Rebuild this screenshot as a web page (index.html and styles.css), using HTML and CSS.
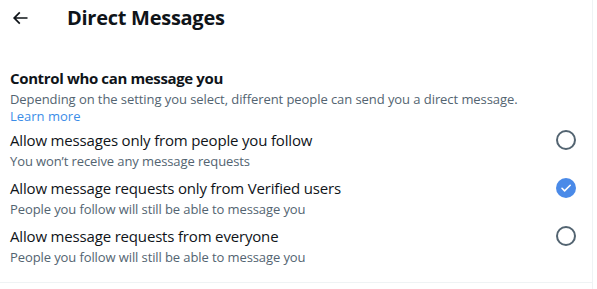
FILE: index.html
```html
<!DOCTYPE html>
<html>
<head>
<meta charset="utf-8">
<link rel="stylesheet" href="styles.css">
</head>
<body>
<div class="panel">
  <header class="header">
    <span class="back">
      <svg viewBox="0 0 24 24" width="20" height="20"><path d="M7.414 13l5.043 5.04-1.414 1.42L3.586 12l7.457-7.46 1.414 1.42L7.414 11H21v2H7.414z" fill="#0f1419"/></svg>
    </span>
    <h1 class="title">Direct Messages</h1>
  </header>
  <section class="section">
    <h2 class="section-title">Control who can message you</h2>
    <p class="desc">Depending on the setting you select, different people can send you a direct message.</p>
    <a class="learn">Learn more</a>
    <div class="options">
      <div class="option">
        <div class="texts">
          <div class="main">Allow messages only from people you follow</div>
          <div class="sub">You won’t receive any message requests</div>
        </div>
        <span class="radio"></span>
      </div>
      <div class="option">
        <div class="texts">
          <div class="main">Allow message requests only from Verified users</div>
          <div class="sub">People you follow will still be able to message you</div>
        </div>
        <span class="radio checked">
          <svg viewBox="0 0 20 20" width="20" height="20"><path d="M6 10.3l2.6 2.6L14.2 7.3" fill="none" stroke="#fff" stroke-width="1.6" stroke-linecap="round" stroke-linejoin="round"/></svg>
        </span>
      </div>
      <div class="option">
        <div class="texts">
          <div class="main">Allow message requests from everyone</div>
          <div class="sub">People you follow will still be able to message you</div>
        </div>
        <span class="radio"></span>
      </div>
    </div>
  </section>
  <div class="divider"></div>
</div>
</body>
</html>
```
FILE: styles.css
```css
html, body {
  margin: 0;
  padding: 0;
  background: #ffffff;
}
body {
  font-family: "Open Sans", "Noto Sans", sans-serif;
  color: #0f1419;
}
.panel {
  width: 592px;
  height: 289px;
  border-right: 1px solid #eff3f4;
  box-sizing: content-box;
}
.header {
  display: flex;
  align-items: center;
  padding: 6px 0 0 10px;
  height: 24px;
}
.back {
  display: flex;
  width: 20px;
  height: 20px;
}
.title {
  margin: 0 0 0 37px;
  font-size: 20px;
  line-height: 24px;
  font-weight: 700;
  letter-spacing: -0.27px;
}
.section {
  padding: 38px 16px 15px 10px;
}
.section-title {
  margin: 0;
  font-size: 15px;
  line-height: 20px;
  font-weight: 700;
  letter-spacing: -0.36px;
}
.desc {
  margin: 3px 0 0;
  font-size: 13px;
  line-height: 17px;
  color: #536471;
  letter-spacing: -0.07px;
}
.learn {
  display: block;
  font-size: 13px;
  line-height: 17px;
  color: #3b8de8;
}
.options {
  margin-top: 5px;
  display: flex;
  flex-direction: column;
  gap: 7px;
}
.option {
  display: flex;
  justify-content: space-between;
  align-items: flex-start;
}
.main {
  font-size: 15px;
  line-height: 20px;
  letter-spacing: -0.17px;
}
.sub {
  margin-top: 1px;
  font-size: 13px;
  line-height: 20px;
  color: #536471;
  letter-spacing: -0.1px;
}
.radio {
  width: 20px;
  height: 20px;
  box-sizing: border-box;
  border: 2px solid #536471;
  border-radius: 50%;
}
.radio.checked {
  border: none;
  background: #4a8ae8;
  display: flex;
}
.divider {
  height: 1px;
  background: #eff3f4;
}
```
